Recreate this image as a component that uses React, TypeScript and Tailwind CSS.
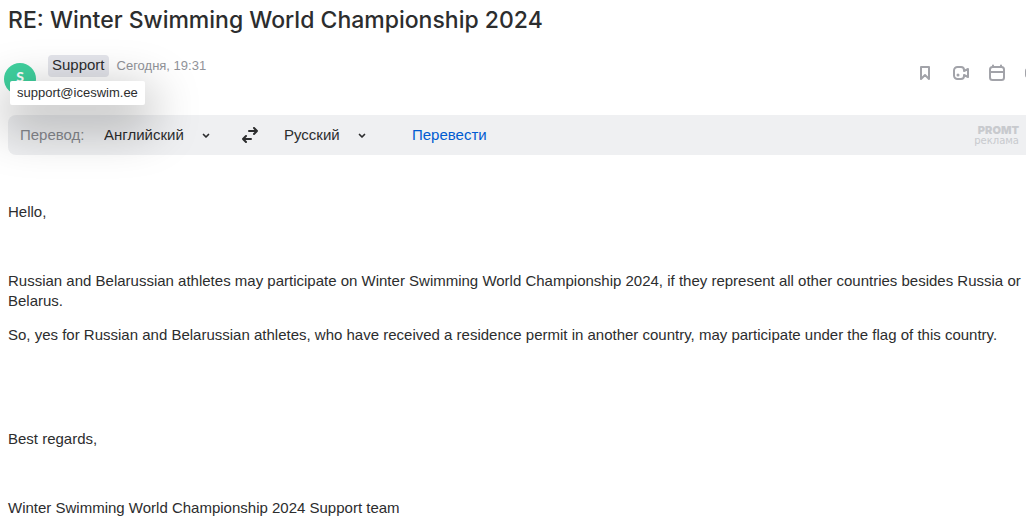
import React from "react";

const paragraphs = [
  { text: "Hello,", space: "mt-[47px]" },
  {
    text: "Russian and Belarussian athletes may participate on Winter Swimming World Championship 2024, if they represent all other countries besides Russia or Belarus.",
    space: "mt-[49px]",
  },
  {
    text: "So, yes for Russian and Belarussian athletes, who have received a residence permit in another country, may participate under the flag of this country.",
    space: "mt-[14px]",
  },
  { text: "Best regards,", space: "mt-[84px]" },
  { text: "Winter Swimming World Championship 2024 Support team", space: "mt-[49px]" },
];

/* Toolbar icons, 24x24 */
const actions = [
  {
    label: "Закладка",
    icon: <path d="M8 6h8v12l-4-4-4 4Z" />,
  },
  {
    label: "Видеозвонок",
    icon: (
      <>
        <path d="M15 10V9a3 3 0 0 0-3-3H8.500A3.500 3.500 0 0 0 5 9.500v5A3.500 3.500 0 0 0 8.500 18H12a3 3 0 0 0 3-3v-1l4 2V8l-4 2" />
        <circle cx="9" cy="14" r="1.500" fill="currentColor" stroke="none" />
      </>
    ),
  },
  {
    label: "Календарь",
    icon: (
      <>
        <rect x="5" y="6" width="14" height="13" rx="2.500" />
        <path d="M5 11h14M8 4.500V6M16 4.500V6" />
      </>
    ),
  },
  {
    label: "Ещё",
    icon: <rect x="5" y="8" width="14" height="8" rx="2" />,
  },
];

type LanguageProps = { label: string; value: string; width: string };

const Language: React.FC<LanguageProps> = ({ label, value, width }) => (
  <div className={`relative flex items-center ${width}`}>
    <select
      aria-label={label}
      defaultValue={value}
      className="w-full appearance-none bg-transparent text-[15px] leading-5 text-[#2c2d2e] outline-none cursor-pointer"
    >
      <option>Английский</option>
      <option>Русский</option>
    </select>
    <svg className="absolute right-0 w-2 h-2 pointer-events-none" viewBox="0 0 8 8" fill="none" stroke="#2c2d2e" strokeWidth="1.700" strokeLinecap="round" strokeLinejoin="round">
      <path d="M1.500 3.500 4 6l2.500-2.500" />
    </svg>
  </div>
);

/* ================== COMPONENT ================== */
const App: React.FC = () => {
  return (
    <main className="min-h-screen overflow-hidden bg-white pl-2 font-['Liberation_Sans',Arial,sans-serif] text-[15px] leading-5 text-[#2c2d2e]">
      <h1 className="pt-1 font-[Inter,sans-serif] text-[23px] leading-8 font-medium">
        RE: Winter Swimming World Championship 2024
      </h1>

      {/* Sender */}
      <header className="mt-[19px] flex h-[60px] items-start justify-between">
        <div className="relative flex items-start">
          <div className="-ml-1 mt-2 flex size-8 justify-center rounded-full bg-[#40d29f] font-[Lato,sans-serif] text-sm leading-7 font-black text-white">
            S
          </div>
          <button className="ml-3 h-[22px] rounded-sm bg-[#e4e5eb] px-1 leading-5 cursor-pointer">
            <span className="block h-[22px]">Support</span>
          </button>
          <time className="ml-2 text-[13px] leading-[22px] text-[#919399]">Сегодня, 19:31</time>
          <div
            role="tooltip"
            className="absolute left-[2px] top-[26px] z-10 rounded-xs bg-white px-[7px] text-[13px] leading-6 shadow-[0_16px_48px_8px_rgba(0,0,0,0.28)]"
          >
            support@iceswim.ee
          </div>
        </div>

        <div className="-mr-[19px] mt-[6px] flex gap-3">
          {actions.map((a) => (
            <button key={a.label} aria-label={a.label} className="size-6 text-[#a2a3a9] cursor-pointer">
              <svg className="size-6" viewBox="0 0 24 24" fill="none" stroke="currentColor" strokeWidth="2" strokeLinejoin="round" strokeLinecap="round">
                {a.icon}
              </svg>
            </button>
          ))}
        </div>
      </header>

      {/* Translate bar */}
      <div className="flex h-10 items-center rounded-l-lg bg-[#eff0f2] pl-3 pr-[7px]">
        <span className="w-[84px] text-[#87898f]">Перевод:</span>
        <Language label="Язык оригинала" value="Английский" width="w-[106px]" />
        <button aria-label="Поменять языки" className="ml-8 cursor-pointer">
          <svg className="size-4" viewBox="0 0 16 16" fill="none" stroke="#2c2d2e" strokeWidth="2" strokeLinecap="round" strokeLinejoin="round">
            <path d="M7 4h8M12 1l3 3-3 3M9 12H1M4 9l-3 3 3 3" />
          </svg>
        </button>
        <div className="ml-[26px]">
          <Language label="Язык перевода" value="Русский" width="w-[82px]" />
        </div>
        <button className="ml-[46px] text-[#005bd1] cursor-pointer">Перевести</button>
        <a href="#promt" className="ml-auto flex flex-col items-end text-[#c8cace]">
          <span className="font-[Inter,sans-serif] text-[11px] leading-[11px] font-black">PROMT</span>
          <span className="font-['DejaVu_Sans',sans-serif] text-[10px] leading-[10px]">реклама</span>
        </a>
      </div>

      {/* Message */}
      <article>
        {paragraphs.map((p) => (
          <p key={p.text} className={p.space}>
            {p.text}
          </p>
        ))}
      </article>
    </main>
  );
};

export default App;
